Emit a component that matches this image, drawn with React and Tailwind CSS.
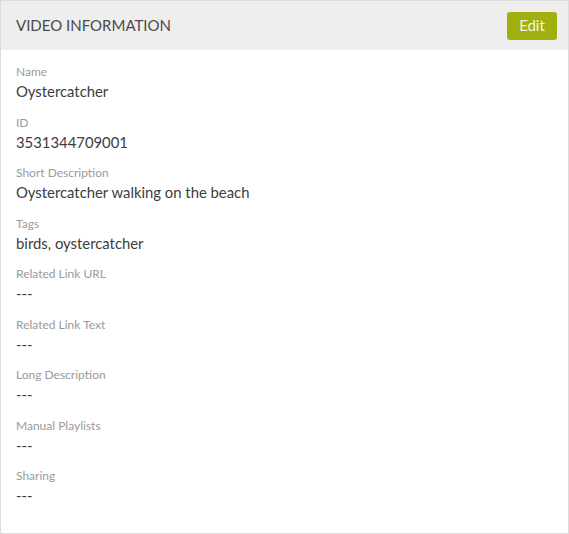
import React from "react";

const fields = [
  ["Name", "Oystercatcher"],
  ["ID", "3531344709001"],
  ["Short Description", "Oystercatcher walking on the beach"],
  ["Tags", "birds, oystercatcher"],
  ["Related Link URL", "---"],
  ["Related Link Text", "---"],
  ["Long Description", "---"],
  ["Manual Playlists", "---"],
  ["Sharing", "---"],
];

export default function App() {
  return (
    <div
      className="w-[569px] h-[534px] border border-[#dcdcdc] bg-white flex flex-col"
      style={{ fontFamily: "Lato, 'Open Sans', sans-serif" }}
    >
      <div className="h-[49px] bg-[#eeeeee] flex items-center justify-between pl-[15px] pr-[11px] shrink-0">
        <div className="text-[15px] text-[#4a4a4a]">VIDEO INFORMATION</div>
        <button className="h-[28px] w-[50px] rounded-[3px] bg-[#a1b00e] text-[#f4f6e0] text-[15px] leading-none">
          Edit
        </button>
      </div>
      <div className="pt-[13px] px-[15px] flex flex-col">
        {fields.map(([label, value]) => (
          <div key={label} className="h-[50.5px]">
            <div className="text-[12px] leading-[18px] text-[#9a9a9a]">{label}</div>
            <div className="text-[14.85px] leading-[20px] text-[#3c3c3c]">{value}</div>
          </div>
        ))}
      </div>
    </div>
  );
}
